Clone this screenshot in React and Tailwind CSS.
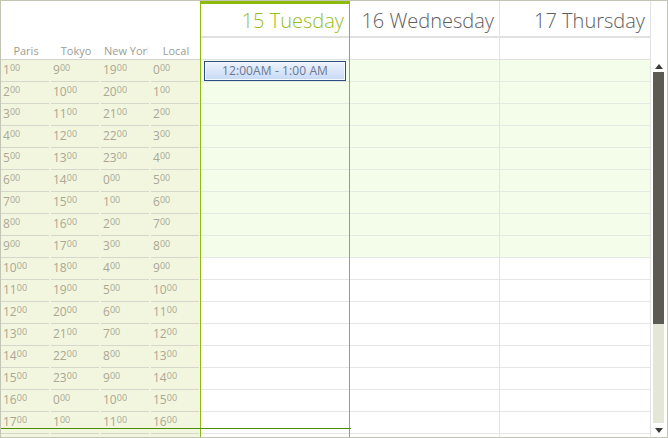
import React from 'react';

const ROWS = Array.from({ length: 18 }, (_, i) => i);
const ZONES = [
  { label: 'Paris', offset: 1 },
  { label: 'Tokyo', offset: 9 },
  { label: 'New York', offset: 19 },
  { label: 'Local', offset: 0 },
];
const DAYS = [
  { label: '15 Tuesday', selected: true },
  { label: '16 Wednesday' },
  { label: '17 Thursday' },
];
const WORK_END = 9; // rows before this get the green work-hours fill

function Hour({ h }) {
  return (
    <div className="flex items-start text-[#aaa795] whitespace-nowrap">
      <span className="text-[12px] leading-[12px]">{h}</span>
      <span className="text-[9px] leading-[9px] -mt-[1px]">00</span>
    </div>
  );
}

function Ruler() {
  return (
    <div className="w-[199px] shrink-0 flex flex-col">
      <div className="h-[59px] shrink-0 flex items-end bg-white border-b border-[#d3d3cc]">
        {ZONES.map(z => (
          <div key={z.label} className="w-[50px] shrink-0 px-[3px] pb-[1px]">
            <div className="overflow-hidden whitespace-nowrap text-center text-[11px] leading-[14px] text-[#9d9d92]">
              {z.label}
            </div>
          </div>
        ))}
      </div>
      <div className="flex-1 bg-[#f2f6df]">
        {ROWS.map(r => (
          <div key={r} className="h-[22px] flex">
            {ZONES.map(z => (
              <div key={z.label} className="w-[50px] shrink-0 pr-[2px]">
                <div className="h-full border-b border-[#d6d6cd] pl-[2px] pt-[4px]">
                  <Hour h={(r + z.offset) % 24} />
                </div>
              </div>
            ))}
          </div>
        ))}
      </div>
    </div>
  );
}

function DayColumn({ day, last }) {
  return (
    <div className={
      day.selected
        ? 'w-[150px] shrink-0 flex flex-col border-x border-[#8dbb0c]'
        : 'w-[150px] shrink-0 flex flex-col ' + (last ? '' : 'border-r border-[#e3e3e3]')
    }>
      <div className={
        day.selected
          ? 'h-[37px] shrink-0 border-t-[3px] border-b-2 border-t-[#8dbb0c] border-b-[#e0e0e0] flex items-center justify-end pr-[5px] pt-[2px]'
          : 'h-[37px] shrink-0 border-b-2 border-[#e0e0e0] flex items-center justify-end pr-[5px] pt-[5px]'
      }>
        <span className={
          day.selected
            ? 'text-[20px] font-light leading-none text-[#93bd1c] whitespace-nowrap'
            : 'text-[20px] font-light leading-none text-[#5e5e5e] whitespace-nowrap'
        }>{day.label}</span>
      </div>
      <div className="h-[22px] shrink-0 border-b border-[#e0e0e0]" />
      <div className="flex-1">
        {ROWS.map(r => (
          <div key={r} className={
            r < WORK_END
              ? 'h-[22px] border-b border-[#e6e9e3] bg-[#f4fdea] relative'
              : 'h-[22px] border-b border-[#e6e6e6] bg-white relative'
          }>
            {day.selected && r === 0 && (
              <div className="absolute left-[3px] right-[3px] top-[1px] h-[20px] border border-[#2c4c82] bg-gradient-to-b from-[#edf3fe] to-[#c7d9f5] shadow-[inset_0_0_0_1px_#f4f8ff] flex items-center justify-center text-[12px] text-[#6a7893] tracking-[0.1px]">
                12:00AM - 1:00 AM
              </div>
            )}
          </div>
        ))}
      </div>
    </div>
  );
}

function Scrollbar() {
  return (
    <div className="w-[16px] shrink-0 flex flex-col border-l border-[#e2e2e2] bg-white">
      <div className="h-[60px] shrink-0" />
      <div className="h-[11px] shrink-0 flex items-center justify-center">
        <svg width="8" height="5" viewBox="0 0 8 5"><path d="M0 5 L4 0 L8 5 Z" fill="#3a3a36" /></svg>
      </div>
      <div className="flex-1 flex flex-col px-[2px]">
        <div className="h-[252px] bg-[#5b5b54]" />
        <div className="flex-1 bg-[#e4e7d5]" />
      </div>
      <div className="h-[14px] shrink-0 flex items-center justify-center">
        <svg width="8" height="5" viewBox="0 0 8 5"><path d="M0 0 L8 0 L4 5 Z" fill="#3a3a36" /></svg>
      </div>
    </div>
  );
}

export default function App() {
  return (
    <div className="w-[668px] h-[438px] border border-[#c3c5b4] bg-white relative overflow-hidden flex" style={{ fontFamily: '"Open Sans", "Noto Sans", sans-serif' }}>
      <Ruler />
      {DAYS.map((d, i) => <DayColumn key={d.label} day={d} last={i === DAYS.length - 1} />)}
      <Scrollbar />
      {/* current time marker */}
      <div className="absolute left-0 top-[427px] w-[350px] h-px bg-[#4f8d06]" />
    </div>
  );
}
